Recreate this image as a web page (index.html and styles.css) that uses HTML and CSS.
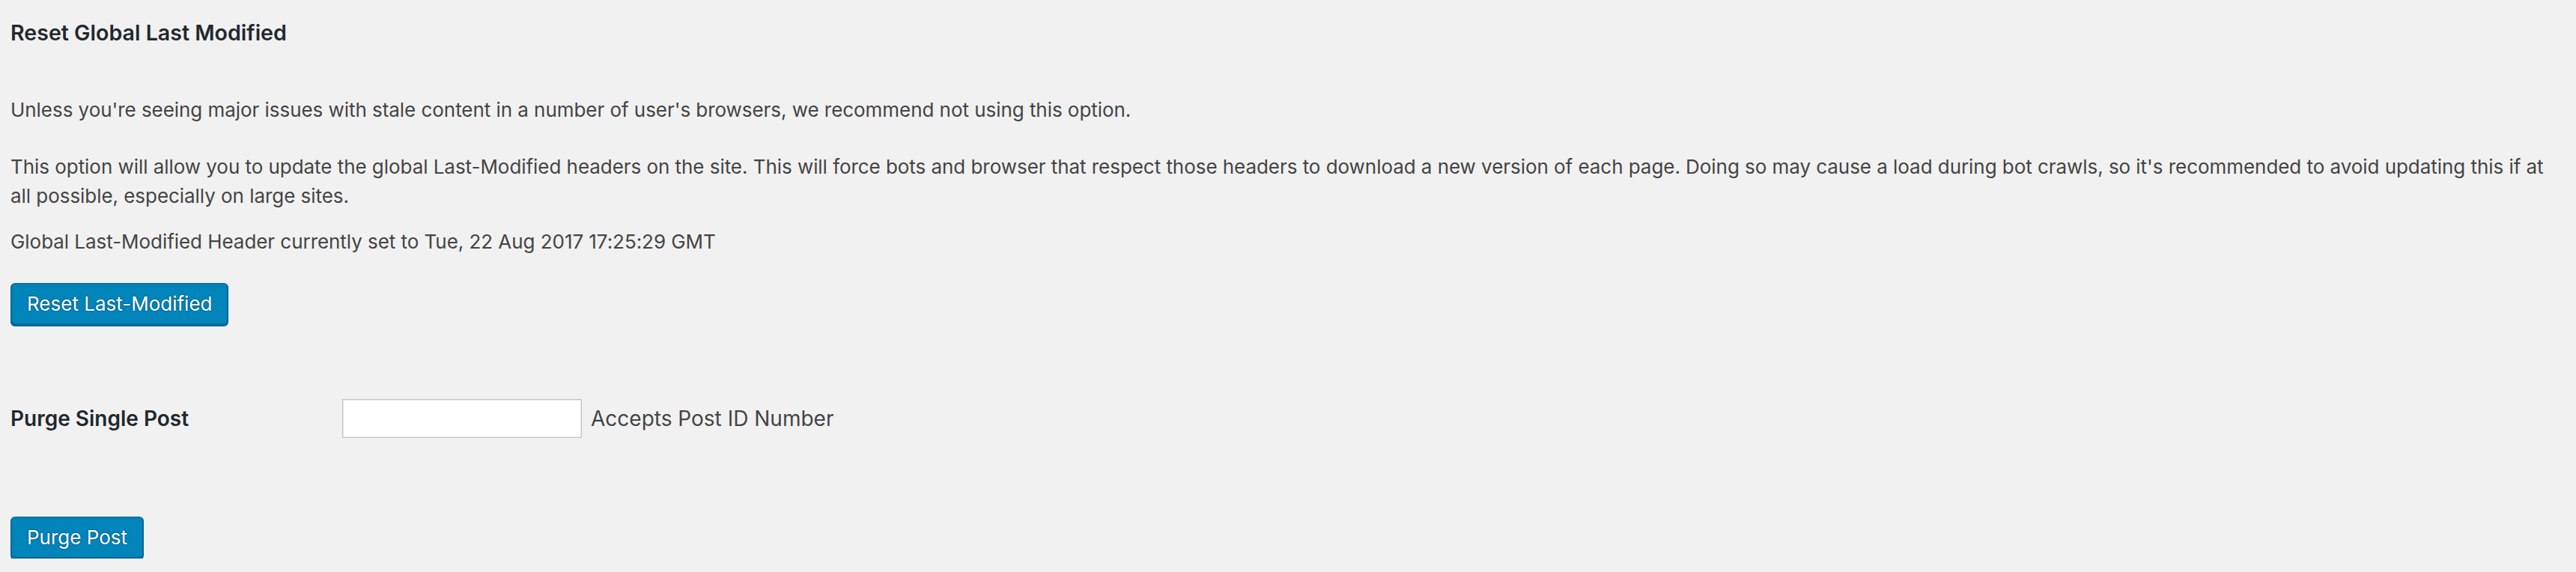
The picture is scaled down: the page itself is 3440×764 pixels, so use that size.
FILE: index.html
```html
<!DOCTYPE html>
<html lang="en">
<head>
<meta charset="utf-8">
<title>Reset Global Last Modified</title>
<link rel="stylesheet" href="styles.css">
</head>
<body>
<div class="wrap">
  <h3 class="section-title">Reset Global Last Modified</h3>
  <p class="text intro">Unless you're seeing major issues with stale content in a number of user's browsers, we recommend not using this option.</p>
  <p class="text explain">This option will allow you to update the global Last-Modified headers on the site. This will force bots and browser that respect those headers to download a new version of each page. Doing so may cause a load during bot crawls, so it's recommended to avoid updating this if at all possible, especially on large sites.</p>
  <p class="text status">Global Last-Modified Header currently set to Tue, 22 Aug 2017 17:25:29 GMT</p>
  <div class="actions first">
    <button type="button" class="btn-primary">Reset Last-Modified</button>
  </div>
  <div class="form-row">
    <label class="form-label" for="post-id">Purge Single Post</label>
    <div class="form-field">
      <input type="text" id="post-id" class="text-input">
      <span class="field-desc">Accepts Post ID Number</span>
    </div>
  </div>
  <div class="actions second">
    <button type="button" class="btn-primary">Purge Post</button>
  </div>
</div>
</body>
</html>
```
FILE: styles.css
```css
html, body {
  margin: 0;
  padding: 0;
  background: #f1f1f1;
}

body {
  font-family: Inter, "Noto Sans", sans-serif;
  color: #444;
}

.wrap {
  padding: 0 10px 0 14px;
}

.section-title {
  margin: 0;
  padding-top: 25px;
  font-size: 28.6px;
  line-height: 37.2px;
  font-weight: 600;
  color: #23282d;
}

.text {
  margin: 0;
  font-size: 26px;
  line-height: 39px;
  letter-spacing: -0.05px;
}

.intro {
  margin-top: 65px;
}

.explain {
  margin-top: 37px;
}

.status {
  margin-top: 22px;
}

.actions {
  display: flex;
}

.actions.first {
  margin-top: 36px;
}

.actions.second {
  margin-top: 105px;
}

.btn-primary {
  box-sizing: border-box;
  height: 56px;
  margin: 0;
  padding: 0 20px;
  font-family: Inter, "Noto Sans", sans-serif;
  font-size: 26px;
  line-height: 52px;
  color: #fff;
  background: #0085ba;
  border: 2px solid;
  border-color: #0073aa #006799 #006799;
  border-radius: 6px;
  box-shadow: 0 2px 0 #006799;
  text-shadow: 0 -1px 1px #006799, 1px 0 1px #006799, 0 1px 1px #006799, -1px 0 1px #006799;
  cursor: pointer;
  white-space: nowrap;
}

.form-row {
  display: flex;
  align-items: center;
  margin-top: 99px;
  height: 52px;
}

.form-label {
  width: 443px;
  flex: none;
  font-size: 28px;
  line-height: 36px;
  font-weight: 600;
  color: #23282d;
}

.form-field {
  display: flex;
  align-items: center;
  gap: 12px;
}

.text-input {
  box-sizing: border-box;
  width: 320px;
  height: 52px;
  margin: 0;
  padding: 0 8px;
  background: #fff;
  border: 1px solid #c3c3c3;
  box-shadow: inset 0 0 0 1px #e6e6e6;
  border-radius: 0;
  font-family: Inter, "Noto Sans", sans-serif;
  font-size: 28px;
  outline: none;
}

.field-desc {
  font-size: 28px;
  line-height: 36px;
  color: #444;
}
```
